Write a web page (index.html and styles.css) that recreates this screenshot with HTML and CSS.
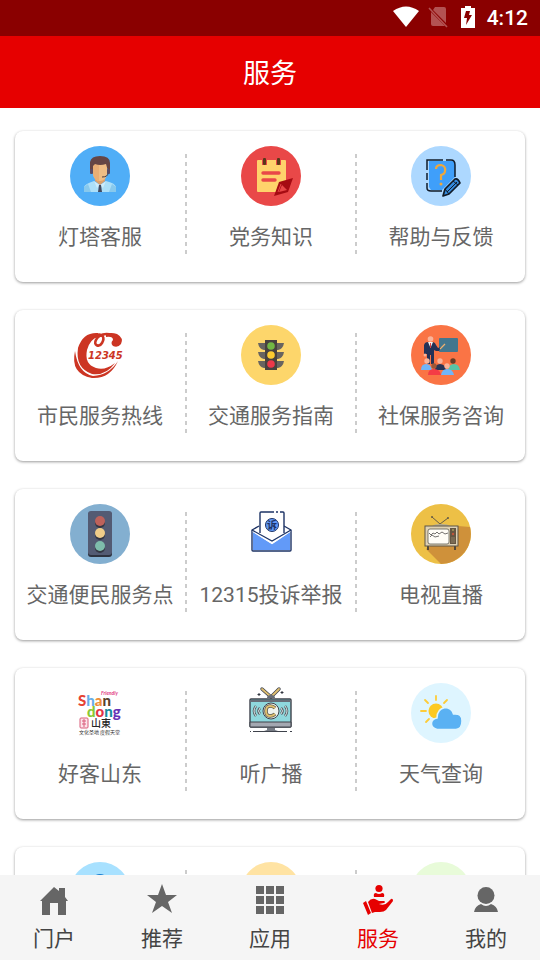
FILE: index.html
```html
<!DOCTYPE html>
<html lang="zh-CN">
<head>
<meta charset="utf-8">
<meta name="viewport" content="width=device-width, initial-scale=1">
<title>服务</title>
<link rel="stylesheet" href="styles.css">
</head>
<body>
<div class="status">
  <svg width="26" height="22" viewBox="0 0 26 22"><path fill="#fff" d="M0 5Q13-4 26 5L13 21Z"/></svg>
  <svg class="sim" width="20" height="22" viewBox="0 0 20 22"><path fill="#b35252" d="M7 1H16Q18 1 18 3V17L5 4ZM3 6L17 20H5Q3 20 3 18Z"/><path stroke="#b35252" stroke-width="1.600" d="M1 2L19 21"/></svg>
  <svg class="battery" width="14" height="22" viewBox="0 0 14 22"><path fill="#fff" d="M4 0H10V2H14V22H0V2H4Z"/><path fill="#8a0000" d="M5 5H9L8 9H11L5 19L6 12H3Z"/></svg>
  <span>4:12</span>
</div>
<header class="header"><h1>服务</h1></header>

<main class="content">
  <section class="card">
    <a class="item" href="#">
      <svg class="icon" viewBox="0 0 60 60"><circle cx="30" cy="30" r="30" fill="#50aef7"/><path fill="#acdff8" d="M14 46V41Q15 38 24 35L30 39L36 35Q45 37 46 41V46Z"/><path fill="#88c9ed" d="M14 46V41L18 38L21 46ZM46 46V41L42 38L39 46Z"/><path fill="#dca16c" d="M25 30H35V35L30 39L25 35Z"/><path fill="#f0bd85" d="M23 18H37V28Q36 35 30 35Q24 35 23 28Z"/><path fill="#e9ae75" d="M23 18H29V35Q24 34 23 28Z"/><path fill="#654545" d="M20 25V16Q21 10 30 10Q40 10 40 17V25H38L36 18Q30 20 25 18L23 20V26Z"/><path d="M38 27Q38 31 32 31" fill="none" stroke="#453b45" stroke-width="1"/><rect x="20" y="23" width="3" height="5" rx="1" fill="#594c66"/><rect x="37" y="23" width="3" height="5" rx="1" fill="#594c66"/><path fill="#fff" d="M24 35L30 39L27 42ZM36 35L30 39L33 42Z" opacity=".4"/><path fill="#434a61" d="M29 39H31L32 46H28Z"/></svg>
      <span class="label">灯塔客服</span>
    </a>
    <a class="item" href="#">
      <svg class="icon" viewBox="0 0 60 60"><circle cx="30" cy="30" r="30" fill="#e94848"/><rect x="16" y="14" width="29" height="32" rx="1" fill="#ffd36b"/><path fill="#e94848" d="M21 12H26V19H21ZM35 12H40V19H35Z"/><rect x="22" y="12" width="3" height="7" rx="1" fill="#5a3818"/><rect x="36" y="12" width="3" height="7" rx="1" fill="#5a3818"/><path d="M22 27H38M22 34H34" stroke="#e94848" stroke-width="3.4" stroke-linecap="round"/><path fill="#a60b12" d="M33 50L38 36L52 32L47 46Z"/><path d="M37 46L40 38" stroke="#e94848" stroke-width="1"/><path fill="#e94848" d="M38 46L41 39L46 44Z"/></svg>
      <span class="label">党务知识</span>
    </a>
    <a class="item" href="#">
      <svg class="icon" viewBox="0 0 60 60"><circle cx="30" cy="30" r="30" fill="#add8ff"/><path fill="#3f9ffa" d="M18 15H41Q44 15 44 19V31L31 44H20L18 41Z"/><path d="M16 24V14H32M35 14H40Q44 14 44 19V31M16 27V34M16 37V42Q16 45 20 45H31" fill="none" stroke="#111b29" stroke-width="1.5"/><path d="M25 23Q25 19 30 19Q35 20 34 25Q34 28 30 29V34" fill="none" stroke="#f0a83c" stroke-width="2.2"/><circle cx="30" cy="38" r="1.5" fill="#f0a83c"/><path fill="#3489db" stroke="#101a27" stroke-width="1.7" stroke-linejoin="round" d="M32 50L34 43L44 33Q47 32 49 37L38 48Z"/><path d="M36 46L46 36M34 43L38 48M42 35L47 39" fill="none" stroke="#101a27" stroke-width="1"/></svg>
      <span class="label">帮助与反馈</span>
    </a>
  </section>

  <section class="card">
    <a class="item" href="#">
      <svg class="icon" viewBox="0 0 60 60"><g fill="#cc3523"><path d="M28 8Q13 7 8 23Q5 43 22 49Q36 51 45 38Q35 46 26 43Q14 39 17 25Q20 14 28 12Z"/><path d="M5 26Q0 49 22 53Q40 54 48 36Q39 50 23 51Q8 48 5 26Z"/></g><path d="M26 10C33 8 35 13 32 18C29 23 23 20 26 15C29 9 36 8 42 10" fill="none" stroke="#cc3523" stroke-width="2.600"/><path fill="#cc3523" d="M36 9Q41 7 47 9Q54 13 51 19Q48 23 43 21Q40 18 43 15Q43 11 36 12Z"/><text x="18" y="34" class="hotline">12345</text></svg>
      <span class="label">市民服务热线</span>
    </a>
    <a class="item" href="#">
      <svg class="icon" viewBox="0 0 60 60"><circle cx="30" cy="30" r="30" fill="#fdd66b"/><path fill="#686460" d="M17 18H43Q42 24 37 25H23Q18 24 17 18ZM17 27H43Q42 33 37 34H23Q18 33 17 27ZM17 36H43Q42 42 37 43H23Q18 42 17 36Z"/><path fill="#48423e" d="M24 15H36V45H24Z"/><circle cx="30" cy="21" r="3.8" fill="#72b844"/><circle cx="30" cy="30" r="3.8" fill="#fccb30"/><circle cx="30" cy="39" r="3.8" fill="#ed3849"/></svg>
      <span class="label">交通服务指南</span>
    </a>
    <a class="item" href="#">
      <svg class="icon" viewBox="0 0 60 60"><circle cx="30" cy="30" r="30" fill="#fa7445"/><rect x="28" y="13" width="19" height="14" rx="1" fill="#43768e"/><path fill="#243257" d="M14 18Q15 17 18 17H21Q24 17 25 20L27 23L30 22L28 26H25L23 25V39H20V30H19V39H16V29H13V20Z"/><path fill="#f5f3f3" d="M17 17H22L19.500 23Z"/><path stroke="#d94343" d="M19.500 18V23"/><path d="M29 24L34 19" stroke="#efb16f" stroke-width="1.3"/><circle cx="19.500" cy="14" r="2.8" fill="#f9b49b"/><circle cx="14" cy="30" r="1.500" fill="#f9b49b"/><g fill="#f9b49b"><circle cx="16" cy="36" r="2.700"/><circle cx="29" cy="36" r="2.700"/></g><circle cx="42" cy="36" r="2.700" fill="#673d28"/><path fill="#70b5fa" d="M10 45Q10 39 15 39Q20 39 21 45Z"/><path fill="#293555" d="M24 45Q24 39 29 39Q34 39 35 45Z"/><path fill="#57c4a5" d="M37 45Q38 39 43 39Q48 39 49 45Z"/><circle cx="23" cy="41" r="2.700" fill="#9d5738"/><circle cx="36" cy="41" r="2.700" fill="#f9b49b"/><path fill="#f53c45" d="M17 50Q17 44 23 44Q29 44 30 50Z"/><path fill="#70b5fa" d="M30 50Q31 44 36 44Q42 44 43 50Z"/></svg>
      <span class="label">社保服务咨询</span>
    </a>
  </section>

  <section class="card">
    <a class="item" href="#">
      <svg class="icon" viewBox="0 0 60 60"><circle cx="30" cy="30" r="30" fill="#83afd0"/><rect x="18" y="8" width="24" height="45" rx="3" fill="#2d323e"/><rect x="18" y="7" width="24" height="44" rx="3" fill="#535b73"/><g fill="#343743"><circle cx="30" cy="19" r="5"/><circle cx="30" cy="31" r="5"/><circle cx="30" cy="44" r="5"/></g><circle cx="30" cy="17" r="5" fill="#bd625b"/><circle cx="30" cy="29" r="5" fill="#f0cd89"/><circle cx="30" cy="42" r="5" fill="#7ebdac"/></svg>
      <span class="label">交通便民服务点</span>
    </a>
    <a class="item" href="#">
      <svg class="icon" viewBox="0 0 60 60"><path fill="#fff" stroke="#1d3365" stroke-width="1.4" stroke-linejoin="round" d="M18 22L11 26V46Q11 47 12 47H49Q50 47 50 46V26L43 22"/><path fill="#629af8" d="M12 28L31 40L49 28V46H12Z"/><path d="M12 27L31 39L49 27" stroke="#fff" stroke-width="2" fill="none"/><path fill="#fff" d="M19 8H43V29L31 36L19 29Z"/><path d="M33 8H20Q19 8 19 9V29M43 29V9Q43 8 42 8H39M35 8H37" fill="none" stroke="#1d3365" stroke-width="1.400"/><path d="M11 26L31 37L50 26" stroke="#1d3365" stroke-width="1.200" fill="none"/><circle cx="31" cy="21" r="6.500" fill="#629af8" stroke="#1d3365"/><text x="31" y="25" class="seal">诉</text></svg>
      <span class="label">12315投诉举报</span>
    </a>
    <a class="item" href="#">
      <svg class="icon" viewBox="0 0 60 60"><circle cx="30" cy="30" r="30" fill="#edc046"/><path fill="#cf913a" d="M47 22L59 23A30 30 0 0 1 30 60L15 45Z"/><path d="M21 13L29 20L37 14" fill="none" stroke="#665b46" stroke-width="1"/><circle cx="21" cy="13" r="1" fill="#665b46"/><circle cx="37" cy="14" r="1" fill="#665b46"/><path d="M21 22Q23 20 30 20Q37 20 39 22Z" fill="#b2aa94"/><path d="M17 42V46M44 42V46" stroke="#544937" stroke-width="2"/><rect x="14" y="22" width="33" height="20" fill="#ded1b4" stroke="#5c5447"/><rect x="17" y="25" width="21" height="15" rx="2" fill="#fffdf6" stroke="#5e5a51" stroke-width=".8"/><path d="M18 29L20 31L22 29L24 30L26 28L28 30L31 28L34 30L37 29M19 33L21 31L24 33L28 32" fill="none" stroke="#514e4b" stroke-width=".8"/><rect x="39" y="24" width="6" height="16" fill="#655643"/><circle cx="42" cy="26" r="1" fill="#a89b59"/><circle cx="42" cy="30" r="1.200" fill="#c2553c"/><path d="M40 34H44M40 36H44M40 38H44" stroke="#a39375" stroke-width=".7"/></svg>
      <span class="label">电视直播</span>
    </a>
  </section>

  <section class="card">
    <a class="item" href="#">
      <svg class="icon" viewBox="0 0 60 60"><text x="8" y="23" class="brand"><tspan fill="#e64332">S</tspan><tspan fill="#68aee8">h</tspan><tspan fill="#ee8e38">a</tspan><tspan fill="#59402c">n</tspan></text><text x="17" y="34" class="brand"><tspan fill="#8ac934">d</tspan><tspan fill="#e43343">o</tspan><tspan fill="#188b9d">n</tspan><tspan fill="#6632b6">g</tspan></text><text x="31" y="12" class="friendly">Friendly</text><rect x="10" y="35" width="8" height="10" rx="1" fill="#fce4ea" stroke="#d95c7b"/><path d="M12 38H16M14 36V44M12 41H16" stroke="#d95c7b"/><text x="21" y="44" class="place">山東</text><text x="9" y="51" class="slogan">文化圣地 度假天堂</text></svg>
      <span class="label">好客山东</span>
    </a>
    <a class="item" href="#">
      <svg class="icon" viewBox="0 0 60 60"><path d="M30 14L21 6M30 14L38 6" stroke="#40444d" stroke-width="3.400" stroke-linecap="round"/><path d="M29 13L21 6M31 13L38 6" stroke="#dfbf70" stroke-width="1.800" stroke-linecap="round"/><path d="M18 10V13M16.500 11.500H19.500M41 8V11M39.500 9.500H42.500" stroke="#31353e"/><path d="M26 15Q26 12 30 12Q34 12 34 15Z" fill="#656b74"/><rect x="9" y="16" width="41" height="28" rx="1" fill="#8fd8dd" stroke="#3e424b" stroke-width="1.400"/><path d="M9 18H50" stroke="#676d77" stroke-width="2"/><path fill="#a4a8b1" stroke="#3e424b" d="M9 39H50V44H9Z"/><circle cx="30" cy="28" r="8" fill="#eff2ed" stroke="#3e424b"/><path d="M34 25Q32 23 29 23Q25 23 25 28Q25 33 29 33Q32 33 34 31" stroke="#555449" stroke-width="3.500" fill="none"/><path d="M34 25Q32 23 29 23Q25 23 25 28Q25 33 29 33Q32 33 34 31" stroke="#dfbf70" stroke-width="2" fill="none"/><path d="M15 23Q11 28 15 33M19 25Q16 28 19 31M44 23Q48 28 44 33M40 25Q43 28 40 31" stroke="#555c62" stroke-width="2.600" fill="none"/><path d="M15 23Q11 28 15 33M19 25Q16 28 19 31M44 23Q48 28 44 33M40 25Q43 28 40 31" stroke="#d9e9e9" stroke-width="1" fill="none"/><path fill="#777c85" d="M26 45H34V47L37 48H23L26 47Z"/><path stroke="#3e424b" d="M12 48.500H46M9 48.500H10M49 48.500H51"/></svg>
      <span class="label">听广播</span>
    </a>
    <a class="item" href="#">
      <svg class="icon" viewBox="0 0 60 60"><circle cx="30" cy="30" r="30" fill="#def5ff"/><circle cx="25" cy="28" r="7.500" fill="#fdc922"/><path d="M25 13V17M14 17L17 20M10 28H15M15 39L18 36M36 17L33 20" stroke="#fdcc39" stroke-width="1.800" stroke-linecap="round"/><path fill="#5ab1f3" stroke="#def5ff" stroke-width="1.500" d="M26 46.500Q20 45 20.500 40Q21 36 26 35Q26 26 34 24.500Q41 25 42.500 31Q51 30 51 38Q51 46 45 46.500Z"/></svg>
      <span class="label">天气查询</span>
    </a>
  </section>

  <section class="card">
    <div class="item"><svg class="icon" viewBox="0 0 60 60"><circle cx="30" cy="30" r="30" fill="#a8e1ff"/><circle cx="30" cy="21" r="9" fill="#1a7fd1"/></svg></div>
    <div class="item"><svg class="icon" viewBox="0 0 60 60"><circle cx="30" cy="30" r="30" fill="#ffe3a3"/></svg></div>
    <div class="item"><svg class="icon" viewBox="0 0 60 60"><circle cx="30" cy="30" r="30" fill="#e8fbd9"/></svg></div>
  </section>
</main>

<nav class="tabs">
  <a class="tab" href="#"><svg class="tab-icon" viewBox="0 0 32 32"><path d="M2 17L16 3L21 7V4H27V13L30 17H28V31H20V19H12V31H4V17Z"/></svg><span>门户</span></a>
  <a class="tab" href="#"><svg class="tab-icon" viewBox="0 0 32 32"><path d="M16 0L20 11H31L22 18L26 29L16 22L6 29L10 18L1 11H12Z"/></svg><span>推荐</span></a>
  <a class="tab" href="#"><svg class="tab-icon" viewBox="0 0 32 32"><path d="M2 2H10V10H2ZM12 2H20V10H12ZM22 2H30V10H22ZM2 12H10V20H2ZM12 12H20V20H12ZM22 12H30V20H22ZM2 22H10V30H2ZM12 22H20V30H12ZM22 22H30V30H22Z"/></svg><span>应用</span></a>
  <a class="tab active" href="#" aria-current="page"><svg class="tab-icon" viewBox="0 0 32 32"><circle cx="17" cy="4.500" r="3.600"/><path d="M12 13Q11 9 14 9Q17 11 20 9Q23 9 22 13ZM1 19L4 17L9 29L6 31ZM6 18Q9 14 13 15L17 17H22Q24 18 22 19L17 20Q23 22 26 18L29 15Q31 14 31 17L24 26Q22 28 18 28H13L10 29Z"/></svg><span>服务</span></a>
  <a class="tab" href="#"><svg class="tab-icon" viewBox="0 0 32 32"><circle cx="16" cy="11.500" r="8.500"/><path d="M4 28Q5 22 11 20Q16 24 21 20Q27 22 28 28Z"/></svg><span>我的</span></a>
</nav>
</body>
</html>
```

FILE: styles.css
```css
* {
  box-sizing: border-box;
}

body {
  margin: 0;
  height: 100vh;
  display: flex;
  flex-direction: column;
  background: #fff;
  color: #666;
  font-family: Roboto, "Noto Sans CJK SC", sans-serif;
  font-size: 21px;
}

a {
  color: inherit;
  text-decoration: none;
}

.status {
  flex: none;
  display: flex;
  align-items: center;
  justify-content: flex-end;
  height: 36px;
  padding: 0 12px 2px;
  background: #8a0000;
  color: #fff;
  font-weight: 500;
  line-height: 32px;
}

.status span {
  padding-top: 2px;
}

.sim {
  margin-left: 9px;
}

.battery {
  margin: 0 12px 0 13px;
}

.header {
  flex: none;
  display: flex;
  align-items: center;
  justify-content: center;
  height: 72px;
  padding-bottom: 2px;
  background: #e60000;
  color: #fff;
}

.header h1 {
  margin: 0;
  font-size: 27px;
  font-weight: 400;
}

.content {
  flex: 1;
  min-height: 0;
  display: flex;
  flex-direction: column;
  gap: 28px;
  padding: 23px 15px 28px;
  overflow-y: auto;
  scrollbar-width: none;
}

.card {
  flex: none;
  display: grid;
  grid-template-columns: repeat(3, 1fr);
  min-height: 151px;
  border-radius: 8px;
  background: #fff;
  box-shadow: 0 1px 3px rgba(0, 0, 0, 0.4);
}

.item {
  position: relative;
  display: flex;
  flex-direction: column;
  align-items: center;
  gap: 15px;
  padding-top: 15px;
}

.item + .item {
  padding-left: 2px;
}

.item + .item::before {
  content: "";
  position: absolute;
  top: 23px;
  left: 0;
  width: 2px;
  height: 101px;
  background: repeating-linear-gradient(#ccc 0 4px, transparent 4px 8px);
}

.icon {
  width: 60px;
  height: 60px;
}

.label {
  line-height: 32px;
  white-space: nowrap;
}

.hotline {
  font: italic 700 10px "DejaVu Sans", sans-serif;
  fill: #cc3523;
  stroke: #fff;
  stroke-width: 2px;
  paint-order: stroke;
}

.seal {
  font: 700 10px "Noto Sans CJK SC", sans-serif;
  text-anchor: middle;
  fill: #1d3365;
}

.brand {
  font: 900 15px Lato, sans-serif;
}

.friendly {
  font: italic 700 5px Lato, sans-serif;
  fill: #e23b86;
}

.place {
  font: 500 10px "Noto Sans CJK SC", sans-serif;
  fill: #262626;
}

.slogan {
  font: 5px "Noto Sans CJK SC", sans-serif;
  fill: #333;
}

.tabs {
  flex: none;
  display: grid;
  grid-template-columns: repeat(5, 1fr);
  height: 85px;
  background: #f5f5f5;
  color: #444;
}

.tab {
  display: flex;
  flex-direction: column;
  align-items: center;
  gap: 7px;
  padding-top: 9px;
  line-height: 32px;
}

.tab-icon {
  width: 32px;
  height: 32px;
  fill: #666;
}

.active {
  color: #e60000;
}

.active .tab-icon {
  fill: #e60000;
}
```
